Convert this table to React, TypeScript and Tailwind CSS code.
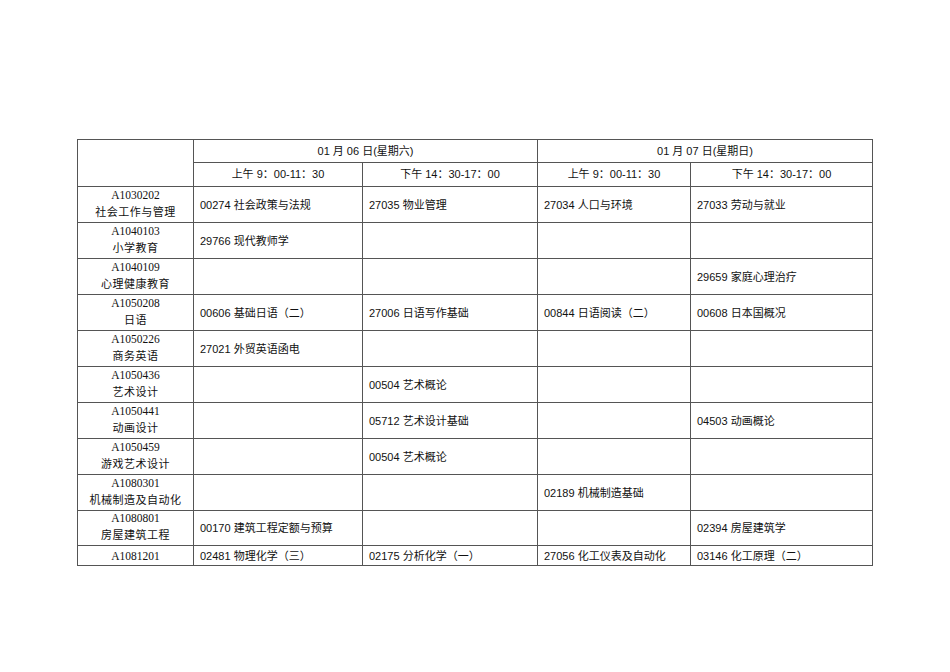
import React from "react";

type Row = { code: string; name?: string; cells: string[]; h: string };

const rows: Row[] = [
  { code: "A1030202", name: "社会工作与管理", h: "h-[36px]", cells: ["00274 社会政策与法规", "27035 物业管理", "27034 人口与环境", "27033 劳动与就业"] },
  { code: "A1040103", name: "小学教育", h: "h-[36px]", cells: ["29766 现代教师学", "", "", ""] },
  { code: "A1040109", name: "心理健康教育", h: "h-[36px]", cells: ["", "", "", "29659 家庭心理治疗"] },
  { code: "A1050208", name: "日语", h: "h-[36px]", cells: ["00606 基础日语（二）", "27006 日语写作基础", "00844 日语阅读（二）", "00608 日本国概况"] },
  { code: "A1050226", name: "商务英语", h: "h-[36px]", cells: ["27021 外贸英语函电", "", "", ""] },
  { code: "A1050436", name: "艺术设计", h: "h-[36px]", cells: ["", "00504 艺术概论", "", ""] },
  { code: "A1050441", name: "动画设计", h: "h-[36px]", cells: ["", "05712 艺术设计基础", "", "04503 动画概论"] },
  { code: "A1050459", name: "游戏艺术设计", h: "h-[36px]", cells: ["", "00504 艺术概论", "", ""] },
  { code: "A1080301", name: "机械制造及自动化", h: "h-[36px]", cells: ["", "", "02189 机械制造基础", ""] },
  { code: "A1080801", name: "房屋建筑工程", h: "h-[34px]", cells: ["00170 建筑工程定额与预算", "", "", "02394 房屋建筑学"] },
  { code: "A1081201", h: "h-[20px]", cells: ["02481 物理化学（三）", "02175 分析化学（一）", "27056 化工仪表及自动化", "03146 化工原理（二）"] },
];

const sans = { fontFamily: '"Liberation Sans", Arial, "Noto Sans CJK SC", sans-serif' } as React.CSSProperties;

export default function App() {
  return (
    <div className="w-[950px] h-[672px] bg-white pt-[139px] pl-[77px] text-[#111]" style={sans}>
      <table className="table-fixed border-collapse w-[795px] text-[11px]">
        <colgroup>
          <col className="w-[116px]" />
          <col className="w-[169px]" />
          <col className="w-[175px]" />
          <col className="w-[153px]" />
          <col className="w-[182px]" />
        </colgroup>
        <tbody>
          <tr className="h-[23px]">
            <td rowSpan={2} className="border border-[#555] p-0"></td>
            <td colSpan={2} className="border border-[#555] p-0 text-center leading-[22px]">01 月 06 日(星期六)</td>
            <td colSpan={2} className="border border-[#555] p-0 text-center leading-[22px]">01 月 07 日(星期日)</td>
          </tr>
          <tr className="h-[24px]">
            <td className="border border-[#555] p-0 text-center leading-[23px]">上午 9：00-11：30</td>
            <td className="border border-[#555] p-0 text-center leading-[23px]">下午 14：30-17：00</td>
            <td className="border border-[#555] p-0 text-center leading-[23px]">上午 9：00-11：30</td>
            <td className="border border-[#555] p-0 text-center leading-[23px]">下午 14：30-17：00</td>
          </tr>
          {rows.map((r) => (
            <tr key={r.code} className={r.h}>
              <td className="border border-[#555] p-0 text-center align-middle">
                <div className={`${r.name ? "leading-[15px]" : "leading-[18px]"} font-['Liberation_Serif','Noto_Sans_CJK_SC',serif] text-[11.5px]`}>{r.code}</div>
                {r.name && <div className="leading-[19px] tracking-[0.5px] text-[11px]">{r.name}</div>}
              </td>
              {r.cells.map((c, i) => (
                <td key={i} className="border border-[#555] py-0 pl-[6px] pr-0 align-middle whitespace-nowrap leading-[18px]">
                  {c}
                </td>
              ))}
            </tr>
          ))}
        </tbody>
      </table>
    </div>
  );
}
